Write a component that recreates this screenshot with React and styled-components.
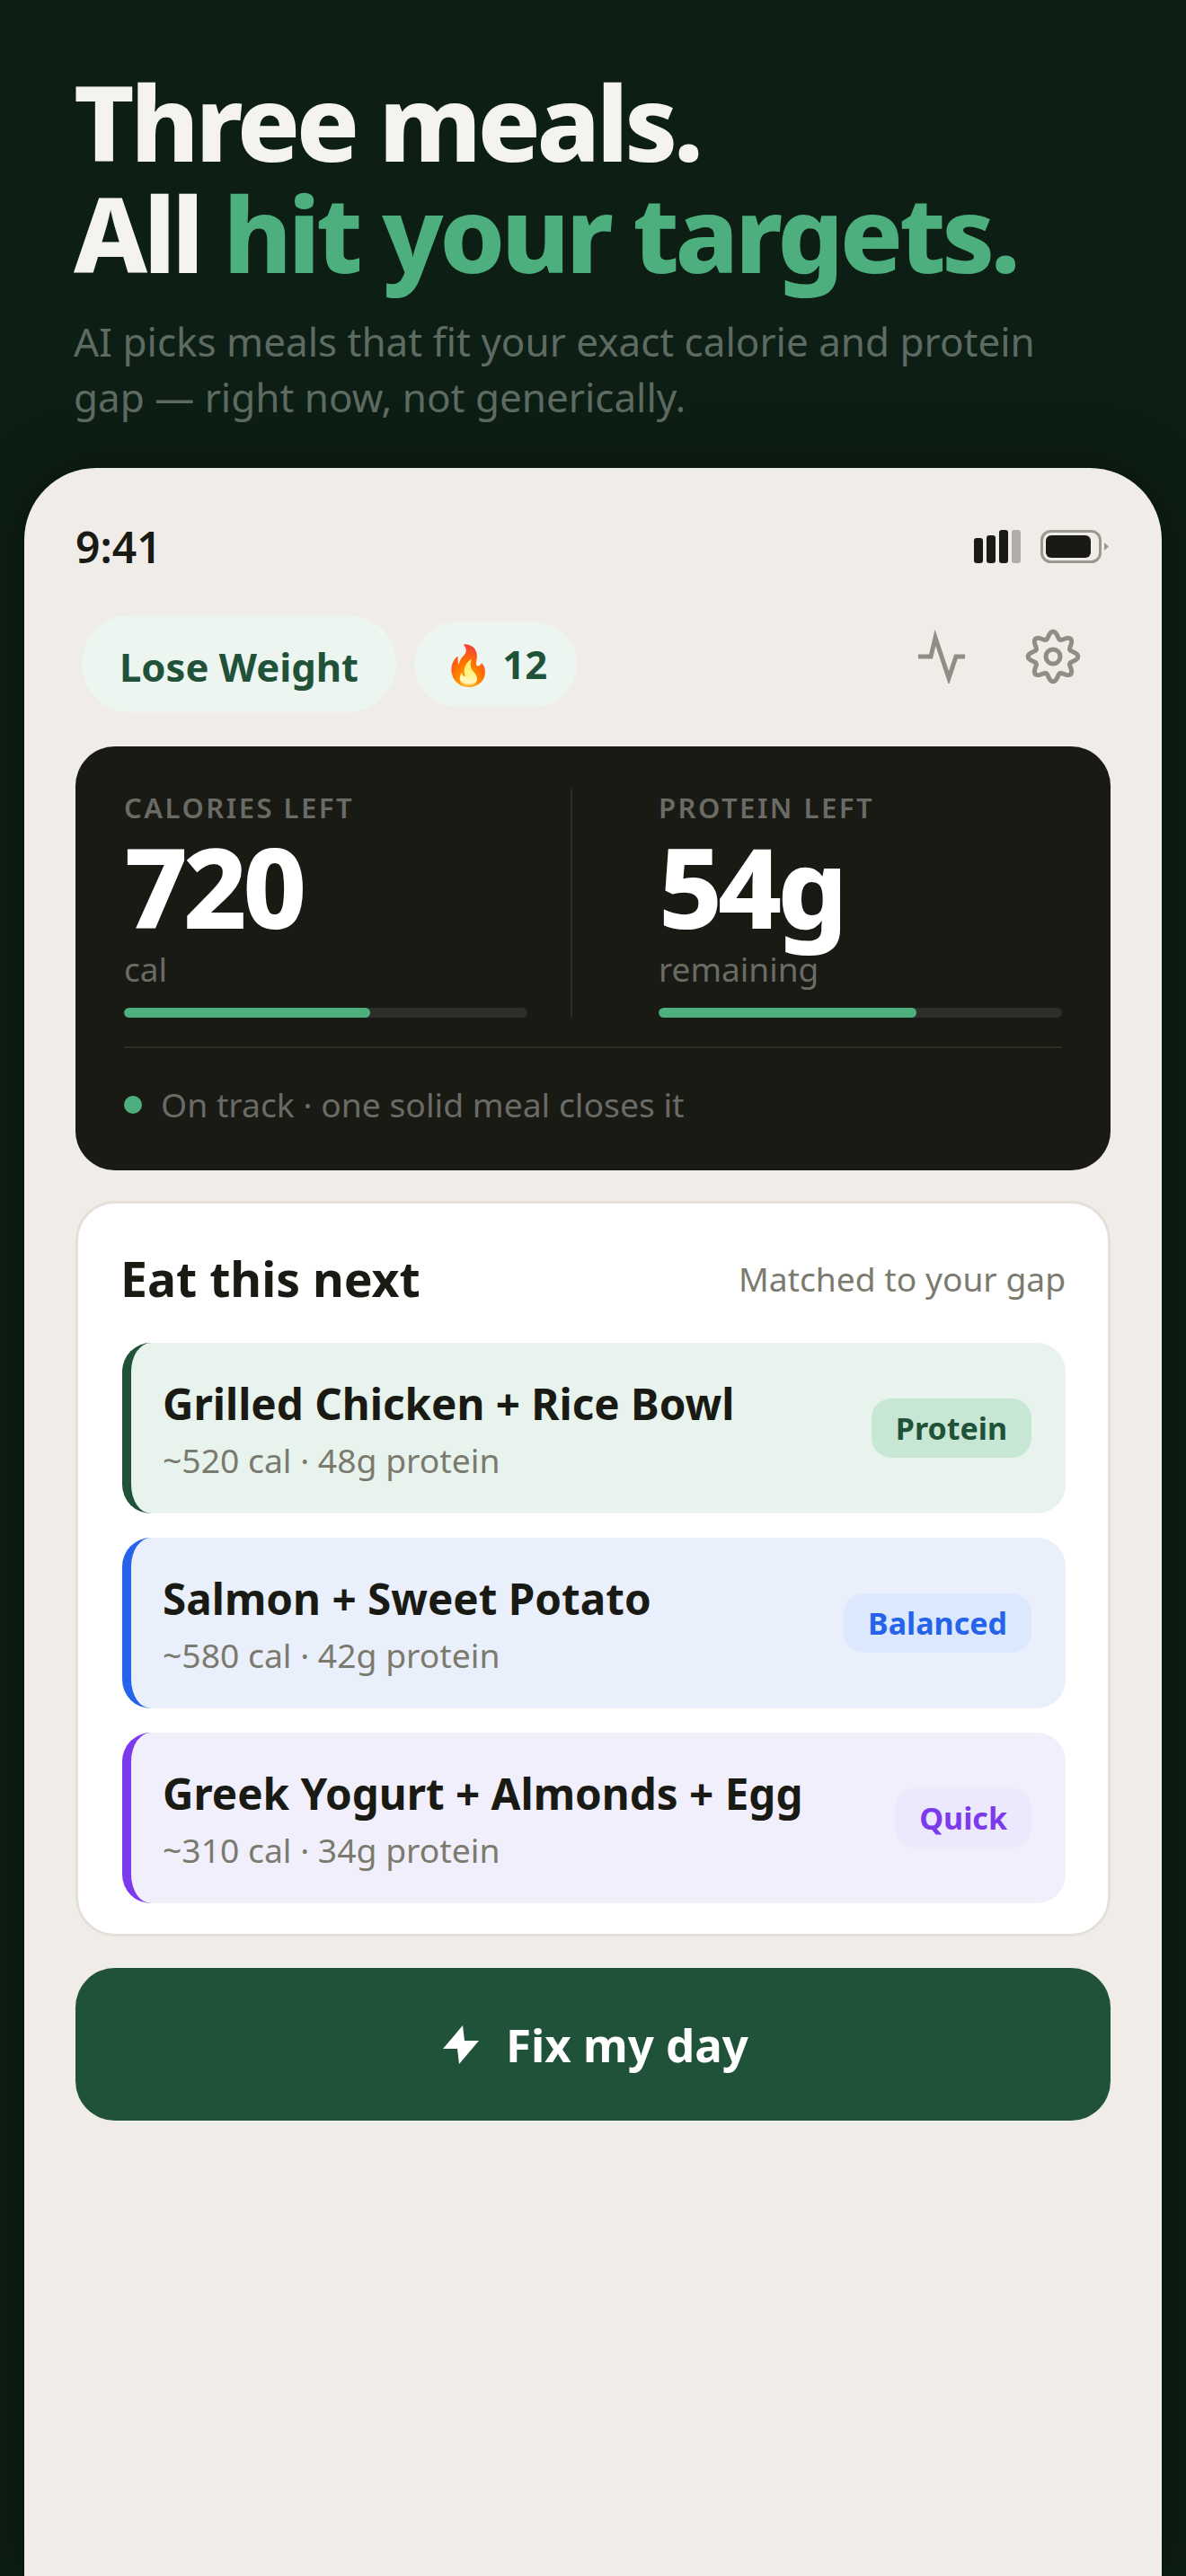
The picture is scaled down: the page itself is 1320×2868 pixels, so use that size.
import React from 'react';
import styled, { createGlobalStyle } from 'styled-components';

const GlobalStyle = createGlobalStyle`
  html, body {
    margin: 0;
    padding: 0;
    background: #0d1f14;
  }
  * {
    box-sizing: border-box;
  }
`;

const Page = styled.div`
  width: 1320px;
  height: 2868px;
  overflow: hidden;
  display: flex;
  flex-direction: column;
  font-family: 'Noto Sans', sans-serif;
  background: #0d1f14;
`;

const Hero = styled.header`
  height: 521px;
  padding: 73px 82px 0;
`;

const Title = styled.h1`
  margin: 0;
  font-size: 116px;
  line-height: 124px;
  font-weight: 800;
  letter-spacing: -4.4px;
  color: #f5f3ee;
`;

const Accent = styled.span`
  color: #4caf7d;
`;

const Subtitle = styled.p`
  margin: 28px 0 0;
  font-size: 44px;
  line-height: 62px;
  color: #5e6b62;
`;

const Phone = styled.main`
  flex: 1;
  margin: 0 27px;
  background: #f0ede8;
  border-radius: 80px 80px 0 0;
  padding: 0 57px;
  box-shadow: 0 0 70px rgba(0, 0, 0, 0.4);
`;

const StatusBar = styled.div`
  height: 164px;
  padding: 11px 2px 0 0;
  display: flex;
  align-items: center;
  justify-content: space-between;
`;

const Clock = styled.span`
  font-size: 48px;
  font-weight: 600;
  color: #1a1a14;
`;

const StatusIcons = styled.div`
  display: flex;
  align-items: center;
  gap: 22px;
`;

const TopRow = styled.div`
  display: flex;
  align-items: center;
  justify-content: space-between;
  padding: 0 32px 0 7px;
`;

const Pills = styled.div`
  display: flex;
  align-items: center;
  gap: 20px;
`;

const Pill = styled.div`
  display: flex;
  align-items: center;
  height: ${(p) => p.$h}px;
  padding: ${(p) => p.$drop}px ${(p) => p.$pad}px 0;
  border-radius: 60px;
  background: #edf5f0;
  color: #1f5238;
  font-size: 43.6px;
  font-weight: 700;
`;

const TopActions = styled.div`
  display: flex;
  align-items: center;
  gap: 66px;
  padding-bottom: 16px;
`;

const GoalCard = styled.section`
  margin-top: 38px;
  background: #1a1a14;
  border-radius: 44px;
  padding: 48px 54px 0;
  height: 472px;
`;

const Stats = styled.div`
  display: flex;
`;

const Stat = styled.div`
  flex: 1 1 0;
  min-width: 0;
  ${(p) => (p.$divided ? 'border-right: 2px solid #2c2c25; padding-right: 48px;' : 'padding-left: 96px;')}
`;

const StatLabel = styled.div`
  font-size: 31px;
  font-weight: 600;
  letter-spacing: 2.5px;
  line-height: 40px;
  margin-bottom: 10px;
  color: #6b6b66;
`;

const StatValue = styled.div`
  font-size: 123px;
  line-height: 116px;
  font-weight: 800;
  letter-spacing: -5px;
  margin-bottom: 12px;
  color: #fff;
`;

const StatUnit = styled.div`
  font-size: 37px;
  line-height: 44px;
  color: #6b6b66;
`;

const Track = styled.div`
  margin-top: 21px;
  height: 11px;
  border-radius: 6px;
  background: #2e2e29;
  overflow: hidden;
`;

const Fill = styled.div`
  height: 100%;
  border-radius: 6px;
  background: #4caf7d;
`;

const StatusLine = styled.div`
  margin-top: 32px;
  border-top: 2px solid #2c2c25;
  padding-top: 38px;
  display: flex;
  align-items: center;
  gap: 21px;
  font-size: 37.3px;
  line-height: 50px;
  color: #6b6b66;
`;

const Dot = styled.span`
  width: 20px;
  height: 20px;
  border-radius: 50%;
  background: #4caf7d;
`;

const NextCard = styled.section`
  margin-top: 34px;
  background: #fff;
  border: 3px solid #e4e0d9;
  border-radius: 44px;
  padding: 47px 47px 34px 49px;
`;

const NextHeader = styled.div`
  display: flex;
  align-items: center;
  justify-content: space-between;
  height: 66px;
  margin: 3px 0 39px -2px;
`;

const NextTitle = styled.h2`
  margin: 0;
  font-size: 53.5px;
  font-weight: 700;
  color: #1a1a14;
`;

const NextHint = styled.span`
  font-size: 37.2px;
  color: #7a7a6e;
`;

const Meals = styled.div`
  display: flex;
  flex-direction: column;
  gap: 27px;
`;

const Meal = styled.div`
  height: 190px;
  border-radius: 32px;
  border-left: 10px solid ${(p) => p.$accent};
  background: ${(p) => p.$bg};
  padding: 0 38px 0 35px;
  display: flex;
  align-items: center;
  justify-content: space-between;
`;

const MealText = styled.div`
  padding-top: 3px;
`;

const MealName = styled.div`
  font-size: 47.6px;
  line-height: 62px;
  font-weight: 700;
  margin-bottom: 6px;
  color: #1a1a14;
`;

const MealMeta = styled.div`
  font-size: 37.3px;
  line-height: 52px;
  color: #7a7a6e;
`;

const Tag = styled.span`
  height: 66px;
  padding: 0 27px;
  display: flex;
  align-items: center;
  border-radius: 22px;
  font-size: 34px;
  font-weight: 700;
  background: ${(p) => p.$bg};
  color: ${(p) => p.$fg};
`;

const FixButton = styled.button`
  margin-top: 35px;
  width: 100%;
  height: 170px;
  border: 0;
  padding: 0 0 0 6px;
  border-radius: 44px;
  background: #1f5238;
  color: #fff;
  font-family: inherit;
  font-size: 51px;
  font-weight: 700;
  display: flex;
  align-items: center;
  justify-content: center;
  gap: 30px;
`;

const meals = [
  { name: 'Grilled Chicken + Rice Bowl', meta: '~520 cal · 48g protein', tag: 'Protein', accent: '#1f5238', bg: '#e8f3ed', tagBg: '#c8e6d4', tagFg: '#1f5238' },
  { name: 'Salmon + Sweet Potato', meta: '~580 cal · 42g protein', tag: 'Balanced', accent: '#2563eb', bg: '#eaf0fb', tagBg: '#dbe8fd', tagFg: '#2563eb' },
  { name: 'Greek Yogurt + Almonds + Egg', meta: '~310 cal · 34g protein', tag: 'Quick', accent: '#7c3aed', bg: '#f1effc', tagBg: '#ede9fd', tagFg: '#7c3aed' },
];

// eight soft lobes around the centre of the settings cog
const cogOutline = Array.from({ length: 160 }, (_, i) => {
  const a = (i / 160) * Math.PI * 2;
  const r = 24 + 3.8 * Math.cos(8 * a);
  return `${(32 + r * Math.cos(a)).toFixed(2)},${(32 + r * Math.sin(a)).toFixed(2)}`;
}).join(' ');

const Signal = () => (
  <svg width="52" height="37" viewBox="0 0 52 37">
    <rect x="0" y="9" width="10" height="28" rx="3" fill="#1a1a14" />
    <rect x="14" y="6" width="10" height="31" rx="3" fill="#1a1a14" />
    <rect x="28" y="0" width="10" height="37" rx="3" fill="#1a1a14" />
    <rect x="42" y="0" width="10" height="37" rx="3" fill="#b0aea8" />
  </svg>
);

const Battery = () => (
  <svg width="76" height="37" viewBox="0 0 76 37">
    <rect x="1.5" y="1.5" width="65" height="34" rx="10" fill="none" stroke="#9a9890" strokeWidth="3" />
    <rect x="6" y="6" width="50" height="25" rx="6" fill="#1a1a14" />
    <path d="M71 14l5 4.5-5 4.5z" fill="#9a9890" />
  </svg>
);

const Pulse = () => (
  <svg width="52" height="60" viewBox="0 0 52 60" fill="none" stroke="#8f8d85" strokeWidth="5">
    <path d="M0 30h14L19 9l15 45 8-24h10" />
  </svg>
);

const Cog = () => (
  <svg width="64" height="64" viewBox="0 0 64 64" fill="none" stroke="#8f8d85" strokeWidth="5">
    <polygon points={cogOutline} />
    <circle cx="32" cy="32" r="8" />
  </svg>
);

const Bolt = () => (
  <svg width="40" height="43" viewBox="0 0 40 43" fill="#fff">
    <path d="M22 0 0 26h16l2 17 22-26H24z" />
  </svg>
);

export default function App() {
  return (
    <Page>
      <GlobalStyle />
      <Hero>
        <Title>
          Three meals.
          <br />
          All <Accent>hit your targets.</Accent>
        </Title>
        <Subtitle>
          AI picks meals that fit your exact calorie and protein
          <br />
          gap — right now, not generically.
        </Subtitle>
      </Hero>
      <Phone>
        <StatusBar>
          <Clock>9:41</Clock>
          <StatusIcons>
            <Signal />
            <Battery />
          </StatusIcons>
        </StatusBar>
        <TopRow>
          <Pills>
            <Pill $h={108} $pad={42} $drop={5}>Lose Weight</Pill>
            <Pill $h={95} $pad={33} $drop={0}>🔥 12</Pill>
          </Pills>
          <TopActions>
            <Pulse />
            <Cog />
          </TopActions>
        </TopRow>
        <GoalCard>
          <Stats>
            <Stat $divided>
              <StatLabel>CALORIES LEFT</StatLabel>
              <StatValue>720</StatValue>
              <StatUnit>cal</StatUnit>
              <Track><Fill style={{ width: '61%' }} /></Track>
            </Stat>
            <Stat>
              <StatLabel>PROTEIN LEFT</StatLabel>
              <StatValue>54g</StatValue>
              <StatUnit>remaining</StatUnit>
              <Track><Fill style={{ width: '64%' }} /></Track>
            </Stat>
          </Stats>
          <StatusLine>
            <Dot />
            On track · one solid meal closes it
          </StatusLine>
        </GoalCard>
        <NextCard>
          <NextHeader>
            <NextTitle>Eat this next</NextTitle>
            <NextHint>Matched to your gap</NextHint>
          </NextHeader>
          <Meals>
            {meals.map((m) => (
              <Meal key={m.name} $accent={m.accent} $bg={m.bg}>
                <MealText>
                  <MealName>{m.name}</MealName>
                  <MealMeta>{m.meta}</MealMeta>
                </MealText>
                <Tag $bg={m.tagBg} $fg={m.tagFg}>{m.tag}</Tag>
              </Meal>
            ))}
          </Meals>
        </NextCard>
        <FixButton>
          <Bolt />
          Fix my day
        </FixButton>
      </Phone>
    </Page>
  );
}
